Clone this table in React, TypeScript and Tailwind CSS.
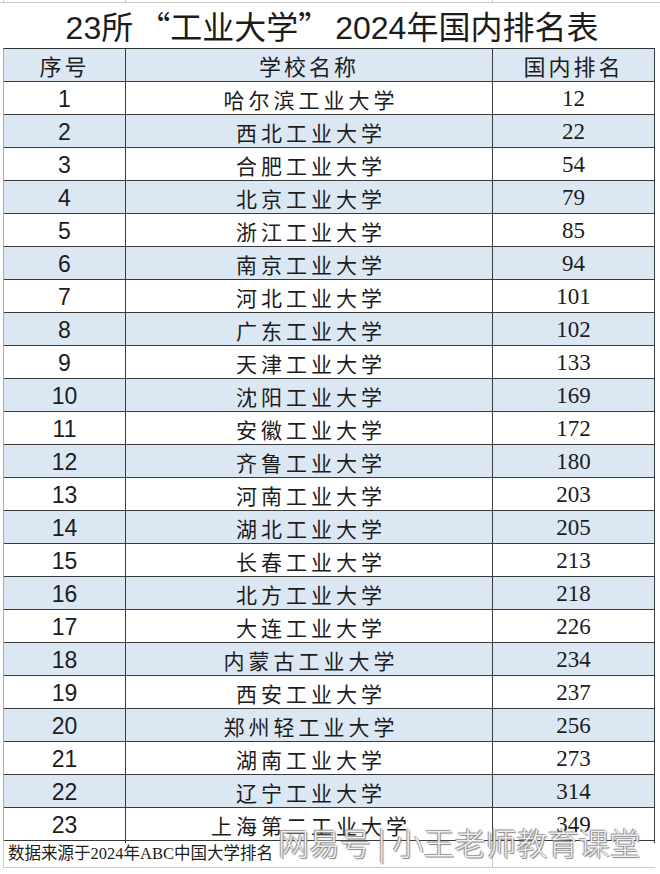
import React from 'react';

const schools: [string, number][] = [
  ['哈尔滨工业大学', 12],
  ['西北工业大学', 22],
  ['合肥工业大学', 54],
  ['北京工业大学', 79],
  ['浙江工业大学', 85],
  ['南京工业大学', 94],
  ['河北工业大学', 101],
  ['广东工业大学', 102],
  ['天津工业大学', 133],
  ['沈阳工业大学', 169],
  ['安徽工业大学', 172],
  ['齐鲁工业大学', 180],
  ['河南工业大学', 203],
  ['湖北工业大学', 205],
  ['长春工业大学', 213],
  ['北方工业大学', 218],
  ['大连工业大学', 226],
  ['内蒙古工业大学', 234],
  ['西安工业大学', 237],
  ['郑州轻工业大学', 256],
  ['湖南工业大学', 273],
  ['辽宁工业大学', 314],
  ['上海第二工业大学', 349],
];

const cjk = "font-['Noto_Sans_CJK_SC',sans-serif]";

export default function App() {
  return (
    <div lang="zh-CN" className="relative w-[660px] h-[874px] overflow-hidden bg-white text-[#1c1c1c]">
      {/* 顶部网格线 */}
      <div className="flex h-[3px] border-b border-[#c9c9c9] pl-[3px]">
        <div className="w-[123px] border-l border-r border-[#c9c9c9]" />
        <div className="w-[367px] border-r border-[#c9c9c9]" />
      </div>

      {/* 标题 */}
      <div className="h-[45px] flex items-center justify-center pl-[4px] pt-[2px]">
        <h1 className="text-[32px] leading-none font-['Liberation_Sans','Noto_Sans_CJK_SC',sans-serif]">
          23所<span className={`${cjk} inline-block w-[37px] text-right`}>“</span>工业大学<span className={`${cjk} inline-block w-[37px] text-left`}>”</span>2024年国内排名表
        </h1>
      </div>

      {/* 表格 */}
      <div className="ml-[3px] w-[652px] border-l border-[#a8a8a8] border-t border-t-[#333]">
        <div className="grid grid-cols-[122px_367px_162px] h-[33px] border-b border-[#3a3a3a] bg-[#dce7f4]">
          <div className={`flex items-center justify-center border-r border-[#3a3a3a] text-[22px] tracking-[3px] ${cjk}`}>序号</div>
          <div className={`flex items-center justify-center border-r border-[#3a3a3a] text-[22px] tracking-[3px] ${cjk}`}>学校名称</div>
          <div className={`flex items-center justify-center border-r border-[#3a3a3a] text-[22px] tracking-[3px] ${cjk}`}>国内排名</div>
        </div>
        {schools.map(([name, rank], i) => (
          <div
            key={name}
            className={`grid grid-cols-[122px_367px_162px] h-[33px] border-b border-[#3a3a3a] ${i % 2 === 1 ? 'bg-[#dce7f4]' : 'bg-white'}`}
          >
            <div className="flex items-center justify-center border-r border-[#3a3a3a] text-[23px] font-['Liberation_Sans',sans-serif]">{i + 1}</div>
            <div className={`flex items-center justify-center border-r border-[#3a3a3a] text-[21px] tracking-[4px] pl-[4px] ${cjk}`}>{name}</div>
            <div className="flex items-center justify-center border-r border-[#3a3a3a] text-[23px] font-['Liberation_Serif',serif]">{rank}</div>
          </div>
        ))}
      </div>

      {/* 来源 */}
      <div className="ml-[3px] w-[652px] h-[27px] flex border-l border-[#c9c9c9] border-b border-b-[#c9c9c9]">
        <div className="w-[489px] border-r border-[#c9c9c9] flex items-center pl-[4px] text-[16.5px] font-['Liberation_Serif','Noto_Sans_CJK_SC',serif]">
          数据来源于2024年ABC中国大学排名
        </div>
      </div>

      {/* 水印 */}
      <div
        className={`absolute left-[278px] top-[826px] text-[31px] leading-none font-light text-white/90 whitespace-nowrap ${cjk} [text-shadow:0_0_1px_#666,1px_1px_1px_#888,-1px_-1px_1px_#999]`}
      >
        网易号 | 小王老师教育课堂
      </div>
    </div>
  );
}
